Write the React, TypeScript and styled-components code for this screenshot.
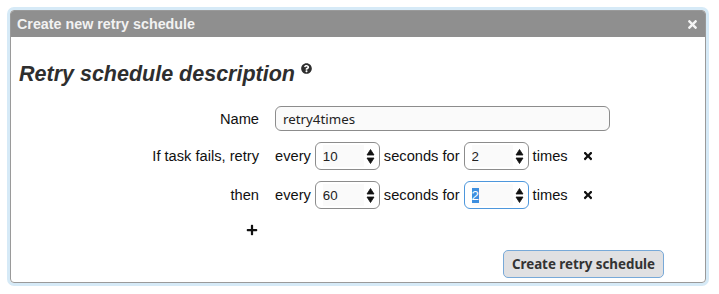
import React, { useEffect, useRef } from "react";
import styled, { createGlobalStyle } from "styled-components";
import { FaTimes, FaPlus, FaQuestionCircle } from "react-icons/fa";

const GlobalStyles = createGlobalStyle`
  html, body {
    margin: 0;
    padding: 0;
    background: #ffffff;
  }
  body {
    font-family: "Liberation Sans", Arial, sans-serif;
    font-size: 14px;
    color: #111;
  }
`;

const Frame = styled.div`
  width: 696px;
  margin: 7px 0 0 7px;
  border: 3px solid #d6eaf7;
  border-radius: 7px;
`;

const Dialog = styled.div`
  height: 273px;
  box-sizing: border-box;
  border: 1px solid #9a9a9a;
  border-radius: 4px;
  background: #fff;
  overflow: hidden;
  display: flex;
  flex-direction: column;
`;

const Header = styled.div`
  height: 26px;
  background: #8f8f8f;
  display: flex;
  align-items: center;
  justify-content: space-between;
  padding: 0 6px 0 6px;
  color: #f2f2f2;
  font-weight: bold;
  font-size: 14.3px;
`;

const CloseBtn = styled.span`
  display: flex;
  color: #f4f4f4;
  font-size: 13px;
`;

const Body = styled.div`
  padding: 0 8px;
  flex: 1;
  display: flex;
  flex-direction: column;
`;

const Title = styled.h2`
  margin: 24px 0 19px;
  font-size: 21.5px;
  line-height: 26px;
  font-style: italic;
  font-weight: bold;
  color: #2e2e2e;
  display: flex;
  align-items: flex-start;
  gap: 6px;
`;

const Help = styled.span`
  display: flex;
  font-size: 11px;
  color: #2e2e2e;
  margin-top: 2px;
`;

const FormGrid = styled.div`
  display: grid;
  grid-template-columns: 240px auto;
  grid-auto-rows: auto;
  column-gap: 16px;
  row-gap: 11px;
  align-items: center;
`;

const Label = styled.div`
  text-align: right;
  font-size: 14.67px;
  color: #111;
`;

const Line = styled.div`
  display: flex;
  align-items: center;
  gap: 4px;
  font-size: 14.67px;
  white-space: nowrap;
`;

const TextInput = styled.input`
  width: 335px;
  height: 25px;
  box-sizing: border-box;
  border: 1px solid #8c8c8c;
  border-radius: 6px;
  background: #fafafa;
  padding: 0 7px;
  font-family: "Noto Sans", sans-serif;
  font-size: 13.33px;
  color: #222;
  outline: none;
`;

const NumberBox = styled.div<{ $active?: boolean }>`
  width: 65px;
  height: 28px;
  box-sizing: border-box;
  border: 1px solid ${({ $active }) => ($active ? "#4d97dc" : "#8c8c8c")};
  border-radius: 6px;
  background: #fff;
  display: flex;
  align-items: center;
  padding: 0 4px 0 7px;
  gap: 2px;
`;

const NumberInput = styled.input`
  width: 40px;
  flex: 1;
  min-width: 0;
  border: none;
  outline: none;
  padding: 0;
  background: #fafafa;
  font-family: "Liberation Sans", Arial, sans-serif;
  font-size: 13.33px;
  color: #222;
  height: 22px;
  &::selection {
    background: #3d8fe0;
    color: #fff;
  }
`;

const Spinner = styled.svg`
  flex: none;
`;

const RowIcon = styled.span`
  display: flex;
  color: #111;
  font-size: 12px;
  margin-left: 10px;
`;

const AddIcon = styled.span`
  display: flex;
  justify-content: flex-end;
  font-size: 12px;
  color: #111;
  height: 20px;
  align-items: center;
  padding-right: 1px;
`;

const Footer = styled.div`
  display: flex;
  justify-content: flex-end;
  padding-right: 33px;
  margin-top: 10px;
`;

const Button = styled.button`
  height: 28px;
  padding: 0 8px;
  border: 1px solid #78a9d8;
  border-radius: 5px;
  background: #e0e0e2;
  font-family: "Noto Sans", sans-serif;
  font-weight: bold;
  font-size: 13.33px;
  color: #333;
`;

const SpinArrows = () => (
  <Spinner width="9" height="17" viewBox="0 0 9 17">
    <path d="M4.5 1.5 L8 7 L1 7 Z" fill="#111" stroke="#111" strokeLinejoin="round" strokeWidth="0.8" />
    <path d="M4.5 15.5 L8 10 L1 10 Z" fill="#111" stroke="#111" strokeLinejoin="round" strokeWidth="0.8" />
  </Spinner>
);

const NumberField = ({ value, active }: { value: string; active?: boolean }) => {
  const ref = useRef<HTMLInputElement>(null);
  useEffect(() => {
    if (active && ref.current) {
      ref.current.focus();
      ref.current.setSelectionRange(0, value.length);
    }
  }, [active, value]);
  return (
    <NumberBox $active={active}>
      <NumberInput ref={ref} type="text" defaultValue={value} />
      <SpinArrows />
    </NumberBox>
  );
};

const RetryRow = ({ every, count, active }: { every: string; count: string; active?: boolean }) => (
  <Line>
    every
    <NumberField value={every} />
    seconds for
    <NumberField value={count} active={active} />
    times
    <RowIcon>
      <FaTimes />
    </RowIcon>
  </Line>
);

const App = () => {
  return (
    <>
      <GlobalStyles />
      <Frame>
        <Dialog>
          <Header>
            <span>Create new retry schedule</span>
            <CloseBtn>
              <FaTimes />
            </CloseBtn>
          </Header>
          <Body>
            <Title>
              Retry schedule description
              <Help>
                <FaQuestionCircle />
              </Help>
            </Title>
            <FormGrid>
              <Label>Name</Label>
              <Line>
                <TextInput defaultValue="retry4times" />
              </Line>
              <Label>If task fails, retry</Label>
              <RetryRow every="10" count="2" />
              <Label>then</Label>
              <RetryRow every="60" count="2" active />
              <AddIcon>
                <FaPlus />
              </AddIcon>
              <div />
            </FormGrid>
            <Footer>
              <Button>Create retry schedule</Button>
            </Footer>
          </Body>
        </Dialog>
      </Frame>
    </>
  );
};

export default App;
